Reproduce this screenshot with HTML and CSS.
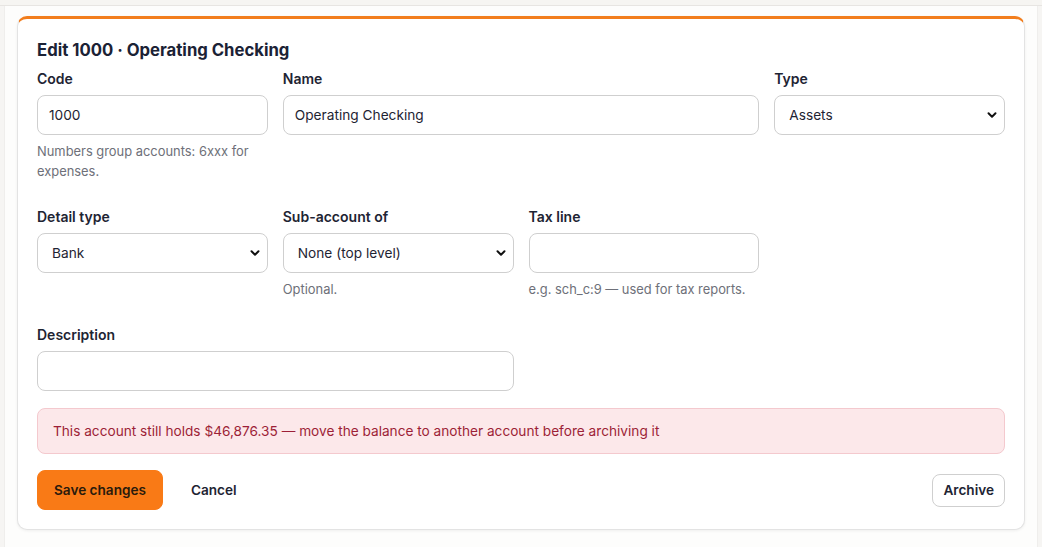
FILE: index.html
```html
<!DOCTYPE html>
<html lang="en">
<head>
<meta charset="utf-8">
<title>Edit account</title>
<link rel="stylesheet" href="styles.css">
</head>
<body>
<div class="topstrip"></div>
<main class="main">
  <section class="card">
    <h2 class="title">Edit 1000 · Operating Checking</h2>
    <form class="form">
      <div class="grid">
        <div class="field">
          <label class="label">Code</label>
          <input class="input" type="text" value="1000">
          <p class="help">Numbers group accounts: 6xxx for expenses.</p>
        </div>
        <div class="field span2">
          <label class="label">Name</label>
          <input class="input" type="text" value="Operating Checking">
        </div>
        <div class="field">
          <label class="label">Type</label>
          <select class="input select"><option>Assets</option></select>
        </div>

        <div class="field">
          <label class="label">Detail type</label>
          <select class="input select"><option>Bank</option></select>
        </div>
        <div class="field">
          <label class="label">Sub-account of</label>
          <select class="input select"><option>None (top level)</option></select>
          <p class="help">Optional.</p>
        </div>
        <div class="field">
          <label class="label">Tax line</label>
          <input class="input" type="text" value="">
          <p class="help">e.g. sch_c:9 — used for tax reports.</p>
        </div>
        <div class="field"></div>

        <div class="field span2">
          <label class="label">Description</label>
          <input class="input" type="text" value="">
        </div>
      </div>

      <div class="alert">This account still holds $46,876.35 — move the balance to another account before archiving it</div>

      <div class="actions">
        <button type="button" class="btn btn-primary">Save changes</button>
        <button type="button" class="btn btn-ghost">Cancel</button>
        <span class="spacer"></span>
        <button type="button" class="btn btn-outline">Archive</button>
      </div>
    </form>
  </section>
</main>
</body>
</html>
```
FILE: styles.css
```css
* { box-sizing: border-box; }

html, body {
  margin: 0;
  padding: 0;
}

body {
  background: #f6f5f3;
  font-family: Inter, "Noto Sans", "Liberation Sans", sans-serif;
  color: #1e2433;
  height: 547px;
  overflow: hidden;
}

.topstrip {
  height: 6px;
  background: #f6f5f2;
  border-bottom: 1px solid #e7e5e2;
}

.main {
  margin: 0 4px;
  background: #fdfdfc;
  border-left: 1px solid #efeeec;
  border-right: 1px solid #efeeec;
  padding: 10px 12px 20px;
  min-height: 541px;
}

.card {
  background: #ffffff;
  border: 1px solid #e3e3e3;
  border-top: 3px solid #f27d1c;
  border-radius: 10px;
  box-shadow: 0 1px 3px rgba(0, 0, 0, 0.06);
  padding: 19px 19px 19px;
}

.title {
  margin: 0 0 7px;
  font-size: 16.7px;
  line-height: 24px;
  font-weight: 700;
  color: #1b2235;
}

.form { margin: 0; }

.grid {
  display: grid;
  grid-template-columns: repeat(4, 1fr);
  column-gap: 15px;
  row-gap: 25px;
}

.field {
  display: flex;
  flex-direction: column;
  min-width: 0;
}

.span2 { grid-column: span 2; }

.label {
  font-size: 14px;
  line-height: 20px;
  font-weight: 600;
  color: #1e2433;
  margin-bottom: 6px;
}

.input {
  height: 40px;
  width: 100%;
  border: 1px solid #cfcfcf;
  border-radius: 8px;
  background: #ffffff;
  font-family: inherit;
  font-size: 13.7px;
  color: #1e2433;
  padding: 0 11px;
  outline: none;
}

.select {
  appearance: none;
  -webkit-appearance: none;
  padding: 0 30px 0 14px;
  background-image: url("data:image/svg+xml;utf8,<svg xmlns='http://www.w3.org/2000/svg' width='12' height='12' viewBox='0 0 12 12'><path d='M2.5 4.3 6 7.8 9.5 4.3' fill='none' stroke='%23111' stroke-width='2' stroke-linecap='round' stroke-linejoin='round'/></svg>");
  background-repeat: no-repeat;
  background-position: right 6px center;
  background-size: 12px 12px;
}

.help {
  margin: 7px 0 0;
  font-size: 12.9px;
  line-height: 20px;
  color: #6e7079;
}

.alert {
  margin-top: 17px;
  background: #fce8ea;
  border: 1px solid #f4c9ce;
  border-radius: 8px;
  padding: 12px 15px;
  font-size: 13.65px;
  line-height: 20px;
  min-height: 46px;
  color: #9d1f37;
}

.actions {
  display: flex;
  align-items: center;
  margin-top: 16px;
  gap: 10px;
}

.spacer { flex: 1; }

.btn {
  font-family: inherit;
  font-size: 13.6px;
  font-weight: 600;
  border-radius: 8px;
  cursor: pointer;
  color: #1e2433;
}

.btn-primary {
  height: 40px;
  padding: 0 16px;
  background: #f97a16;
  border: 1px solid #f97a16;
  color: #2a1a0c;
}

.btn-ghost {
  height: 40px;
  padding: 0 17px;
  background: transparent;
  border: 1px solid transparent;
}

.btn-outline {
  height: 33px;
  padding: 0 10px;
  background: #ffffff;
  border: 1px solid #cfcfcf;
}
```
